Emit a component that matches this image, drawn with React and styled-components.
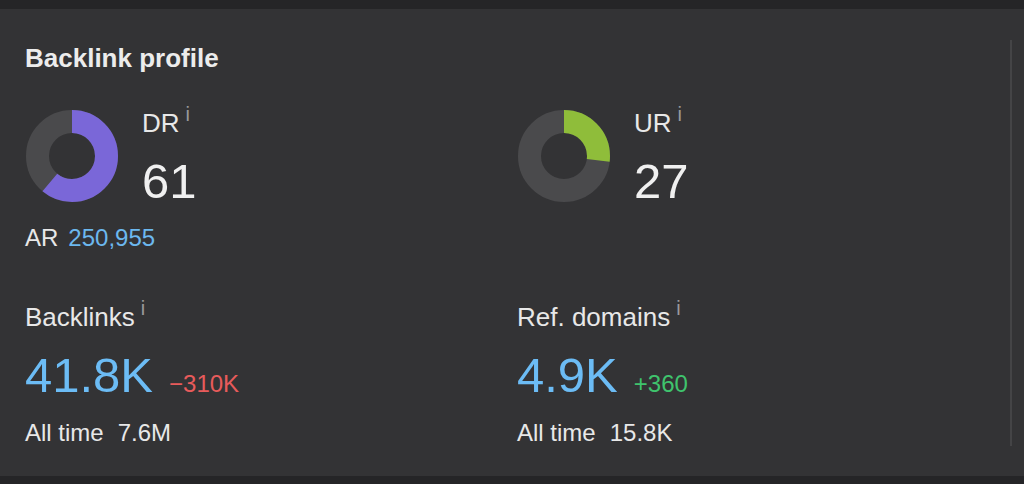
import React from "react"
import styled, { createGlobalStyle } from "styled-components"

const GlobalStyle = createGlobalStyle`
  html, body {
    margin: 0;
    padding: 0;
    background: #252527;
    font-family: "Liberation Sans", Arial, sans-serif;
  }
`

const Page = styled.div`
  height: 484px;
  padding: 9px 0 8px;
  box-sizing: border-box;
  background: #252527;
`

const Panel = styled.section`
  height: 100%;
  background: #333335;
  display: flex;
  padding: 34px 12px 30px 25px;
  box-sizing: border-box;
`

const Content = styled.div`
  flex: 1;
`

const Divider = styled.div`
  width: 2px;
  margin-top: -3px;
  background: #444446;
`

const Title = styled.h2`
  margin: 0 0 33px;
  font-size: 26px;
  font-weight: 700;
  color: #ececec;
  line-height: 30px;
`

const Grid = styled.div`
  display: grid;
  grid-template-columns: 492px 1fr;
`

const Rating = styled.div`
  display: flex;
  align-items: flex-start;
  gap: 23px;

  svg {
    margin-top: 3px;
    flex-shrink: 0;
  }
`

const RatingText = styled.div`
  display: flex;
  flex-direction: column;
  gap: 16px;
  padding-top: 2px;
`

const Label = styled.div`
  font-size: 26px;
  color: #e8e8e8;
  line-height: 30px;

  sup {
    font-size: 20px;
    color: #9a9a9c;
    margin-left: 6px;
    vertical-align: 11px;
    line-height: 0;
  }
`

const BigNumber = styled.div`
  font-size: 49px;
  line-height: 54px;
  color: ${(p) => p.color || "#f0f0f0"};
`

const ArRow = styled.div`
  margin-top: 16px;
  font-size: 24px;
  line-height: 28px;
  color: #e8e8e8;

  span {
    color: #6cb8ef;
    margin-left: 10px;
  }
`

const Metric = styled.div`
  margin-top: 50px;
`

const ValueRow = styled.div`
  display: flex;
  align-items: baseline;
  gap: 16px;
  margin-top: 16px;
`

const Delta = styled.span`
  font-size: 24px;
  color: ${(p) => p.color};
`

const AllTime = styled.div`
  margin-top: 17px;
  font-size: 24px;
  line-height: 28px;
  color: #e8e8e8;

  span {
    margin-left: 14px;
  }
`

const Donut = ({ value, color }) => {
  const r = 34.5
  const c = 2 * Math.PI * r
  return (
    <svg width="94" height="94" viewBox="0 0 94 94">
      <circle cx="47" cy="47" r={r} fill="none" stroke="#4a4a4c" strokeWidth="23" />
      <circle
        cx="47"
        cy="47"
        r={r}
        fill="none"
        stroke={color}
        strokeWidth="23"
        strokeDasharray={`${(c * value) / 100} ${c}`}
        transform="rotate(-90 47 47)"
      />
    </svg>
  )
}

const InfoLabel = ({ children }) => (
  <Label>
    {children}
    <sup>i</sup>
  </Label>
)

export default function App() {
  return (
    <Page>
      <GlobalStyle />
      <Panel>
        <Content>
          <Title>Backlink profile</Title>
          <Grid>
            <div>
              <Rating>
                <Donut value={61} color="#7a67d8" />
                <RatingText>
                  <InfoLabel>DR</InfoLabel>
                  <BigNumber>61</BigNumber>
                </RatingText>
              </Rating>
              <ArRow>
                AR<span>250,955</span>
              </ArRow>
            </div>
            <div>
              <Rating>
                <Donut value={27} color="#8fbd3a" />
                <RatingText>
                  <InfoLabel>UR</InfoLabel>
                  <BigNumber>27</BigNumber>
                </RatingText>
              </Rating>
            </div>
            <Metric>
              <InfoLabel>Backlinks</InfoLabel>
              <ValueRow>
                <BigNumber color="#6cbcf5">41.8K</BigNumber>
                <Delta color="#e85b5b">−310K</Delta>
              </ValueRow>
              <AllTime>
                All time<span>7.6M</span>
              </AllTime>
            </Metric>
            <Metric>
              <InfoLabel>Ref. domains</InfoLabel>
              <ValueRow>
                <BigNumber color="#6cbcf5">4.9K</BigNumber>
                <Delta color="#3fc46d">+360</Delta>
              </ValueRow>
              <AllTime>
                All time<span>15.8K</span>
              </AllTime>
            </Metric>
          </Grid>
        </Content>
        <Divider />
      </Panel>
    </Page>
  )
}
